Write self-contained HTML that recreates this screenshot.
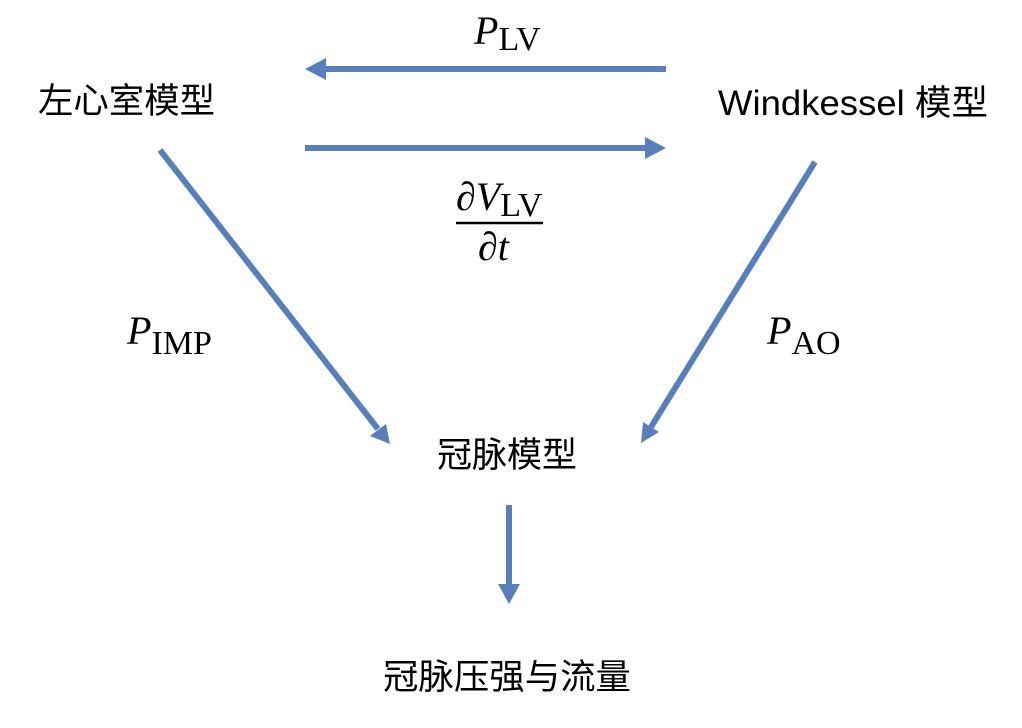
<!DOCTYPE html>
<html><head><meta charset="utf-8"><style>
html,body{margin:0;padding:0;background:#fff;}
svg{display:block}
.cn{font-family:"Liberation Sans","Noto Sans CJK SC",sans-serif;font-size:35px;fill:#000}
.m{font-family:"Liberation Serif","DejaVu Serif",serif;font-size:40px;fill:#000}
.i{font-style:italic}
</style></head><body>
<svg width="1022" height="728" viewBox="0 0 1022 728" xmlns="http://www.w3.org/2000/svg">
<g stroke="#587fba" stroke-width="6" fill="#587fba">
<line x1="666" y1="69" x2="322" y2="69"/>
<polygon points="305,69 326,58 326,80" stroke="none"/>
<line x1="305" y1="148" x2="649" y2="148"/>
<polygon points="666,148 645,137 645,159" stroke="none"/>
<line x1="160" y1="150" x2="378" y2="429"/>
<polygon points="390,444 370,436 386,424" stroke="none"/>
<line x1="815" y1="162" x2="651" y2="427"/>
<polygon points="641,443 643,422 659,432" stroke="none"/>
<line x1="509" y1="505" x2="509" y2="586"/>
<polygon points="509,604 498,584 520,584" stroke="none"/>
</g>
<text class="cn" x="38" y="113" textLength="177" lengthAdjust="spacingAndGlyphs">左心室模型</text>
<text class="cn" x="718" y="115" textLength="270" lengthAdjust="spacingAndGlyphs">Windkessel 模型</text>
<text class="cn" x="437" y="467" textLength="140" lengthAdjust="spacingAndGlyphs">冠脉模型</text>
<text class="cn" x="383" y="689" textLength="248" lengthAdjust="spacingAndGlyphs">冠脉压强与流量</text>
<text class="m" x="474" y="44"><tspan class="i">P</tspan><tspan font-size="34" dy="6">LV</tspan></text>
<text class="m" x="456" y="210"><tspan class="i">∂V</tspan><tspan font-size="34" dy="6">LV</tspan></text>
<line x1="456" y1="223" x2="543" y2="223" stroke="#000" stroke-width="2.5"/>
<text class="m i" x="478" y="260">∂t</text>
<text class="m" x="127" y="344"><tspan class="i">P</tspan><tspan font-size="34" dy="10">IMP</tspan></text>
<text class="m" x="767" y="344"><tspan class="i">P</tspan><tspan font-size="34" dy="10">AO</tspan></text>
</svg>
</body></html>
